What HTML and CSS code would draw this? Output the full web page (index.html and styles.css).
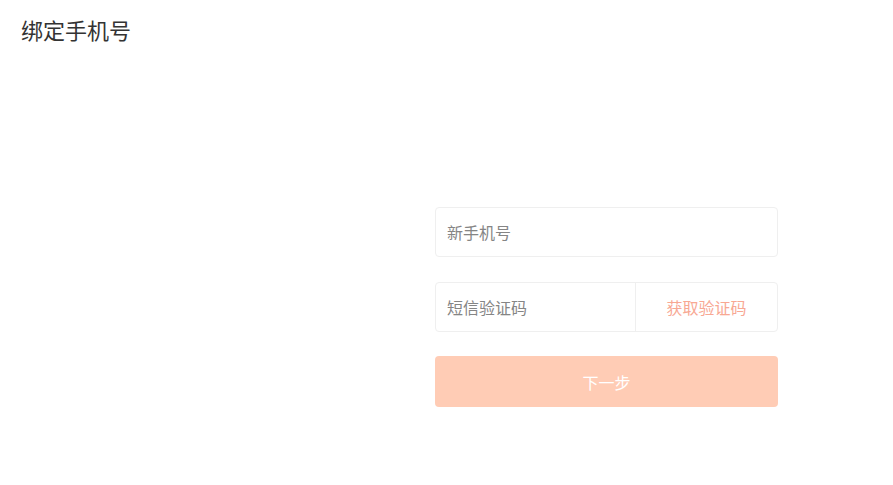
FILE: index.html
```html
<!DOCTYPE html>
<html lang="zh">
<head>
<meta charset="utf-8">
<link rel="stylesheet" href="styles.css">
</head>
<body>
<div class="page">
  <h1 class="title">绑定手机号</h1>
  <form class="form">
    <div class="field">
      <input class="input" type="text" placeholder="新手机号">
    </div>
    <div class="field field-code">
      <input class="input" type="text" placeholder="短信验证码">
      <button type="button" class="code-btn">获取验证码</button>
    </div>
    <button type="button" class="submit">下一步</button>
  </form>
</div>
</body>
</html>
```
FILE: styles.css
```css
* { box-sizing: border-box; }
html, body {
  margin: 0;
  padding: 0;
  background: #fff;
  font-family: "Noto Sans CJK SC", "Noto Sans", sans-serif;
}
.page {
  padding: 16px 0 0 21px;
}
.title {
  margin: 0;
  font-size: 22px;
  line-height: 26px;
  font-weight: 400;
  color: #333;
}
.form {
  margin: 165px 0 0 414px;
  width: 343px;
  display: flex;
  flex-direction: column;
  gap: 25px;
}
.field {
  height: 50px;
  border: 1px solid #efefef;
  border-radius: 4px;
  display: flex;
  align-items: stretch;
  background: #fff;
}
.input {
  flex: 1;
  min-width: 0;
  border: 0;
  outline: none;
  background: transparent;
  padding: 0 11px;
  font-family: inherit;
  font-size: 16px;
  color: #333;
}
.input::placeholder { color: #858585; }
.code-btn {
  width: 142px;
  border: 0;
  border-left: 1px solid #efefef;
  background: transparent;
  font-family: inherit;
  font-size: 16px;
  color: #f8a893;
  padding: 0;
}
.submit {
  margin-top: -1px;
  height: 51px;
  border: 0;
  border-radius: 4px;
  background: #ffccb5;
  color: #fff;
  font-family: inherit;
  font-size: 16px;
}
```
